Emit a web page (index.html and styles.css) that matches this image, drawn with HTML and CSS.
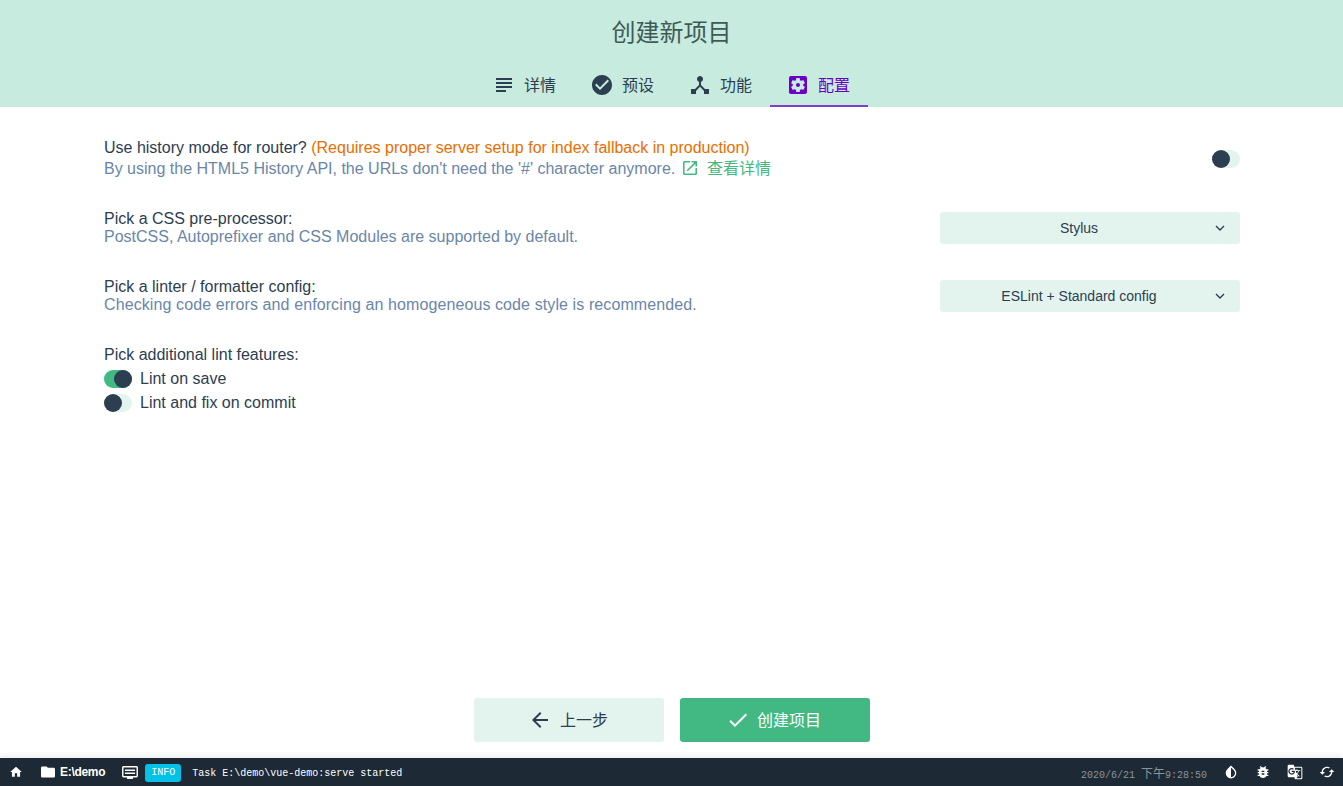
FILE: index.html
```html
<!DOCTYPE html>
<html>
<head>
    <meta charset="utf-8">
    <title>创建新项目</title>
    <link rel="stylesheet" href="styles.css">
</head>
<body>
    <div class="page">
        <div class="header">
            <h1 class="title">创建新项目</h1>
            <div class="tabs">
                <div class="tab">
                    <svg class="tab-icon" viewBox="3 3 18 18"><path d="M14 17H4v2h10v-2zm6-8H4v2h16V9zM4 15h16v-2H4v2zM4 5v2h16V5H4z"/></svg>
                    <span>详情</span>
                </div>
                <div class="tab">
                    <svg class="tab-icon wide" viewBox="2 2 20 20"><path d="M12 2C6.48 2 2 6.48 2 12s4.48 10 10 10 10-4.48 10-10S17.52 2 12 2zm-2 15l-5-5 1.41-1.41L10 14.17l7.59-7.59L19 8l-9 9z"/></svg>
                    <span>预设</span>
                </div>
                <div class="tab">
                    <svg class="tab-icon" viewBox="3 3 18 18"><path d="M17 16l-4-4V8.82C14.15 8.4 15 7.31 15 6c0-1.66-1.34-3-3-3S9 4.34 9 6c0 1.31.85 2.4 2 2.82V12l-4 4H3v5h5v-3.05l4-4.2 4 4.2V21h5v-5h-4z"/></svg>
                    <span>功能</span>
                </div>
                <div class="tab active">
                    <svg class="tab-icon" viewBox="3 3 18 18"><path d="M12 10c-1.1 0-2 .9-2 2s.9 2 2 2 2-.9 2-2-.9-2-2-2zm7-7H5c-1.11 0-2 .9-2 2v14c0 1.1.89 2 2 2h14c1.11 0 2-.9 2-2V5c0-1.1-.89-2-2-2zm-1.75 9c0 .23-.02.46-.05.68l1.48 1.16c.13.11.17.3.08.45l-1.4 2.42c-.09.15-.27.21-.43.15l-1.74-.7c-.36.28-.76.51-1.18.69l-.26 1.85c-.03.17-.18.3-.35.3h-2.8c-.17 0-.32-.13-.35-.29l-.26-1.85c-.43-.18-.82-.41-1.18-.69l-1.74.7c-.16.06-.34 0-.43-.15l-1.4-2.42c-.09-.15-.05-.34.08-.45l1.48-1.16c-.03-.23-.05-.46-.05-.69 0-.23.02-.46.05-.68l-1.48-1.16c-.13-.11-.17-.3-.08-.45l1.4-2.42c.09-.15.27-.21.43-.15l1.74.7c.36-.28.76-.51 1.18-.69l.26-1.85c.03-.17.18-.3.35-.3h2.8c.17 0 .32.13.35.29l.26 1.85c.43.18.82.41 1.18.69l1.74-.7c.16-.06.34 0 .43.15l1.4 2.42c.09.15.05.34-.08.45l-1.48 1.16c.03.23.05.46.05.69z"/></svg>
                    <span>配置</span>
                </div>
            </div>
        </div>

        <div class="content">
            <div class="prompt prompt-first">
                <div class="prompt-text loose">
                    <div>Use history mode for router? <span class="warn">(Requires proper server setup for index fallback in production)</span></div>
                    <div class="desc">By using the HTML5 History API, the URLs don't need the '#' character anymore.
                        <a class="more">
                            <svg class="more-icon" viewBox="3 3 18 18"><path d="M19 19H5V5h7V3H5c-1.11 0-2 .9-2 2v14c0 1.1.89 2 2 2h14c1.1 0 2-.9 2-2v-7h-2v7zM14 3v2h3.59l-9.83 9.83 1.41 1.41L19 6.41V10h2V3h-7z"/></svg>
                            查看详情
                        </a>
                    </div>
                </div>
                <div class="switch"><div class="knob"></div></div>
            </div>

            <div class="prompt">
                <div class="prompt-text">
                    <div>Pick a CSS pre-processor:</div>
                    <div class="desc">PostCSS, Autoprefixer and CSS Modules are supported by default.</div>
                </div>
                <div class="select">
                    <span>Stylus</span>
                    <svg class="chevron" viewBox="0 0 10 6"><path d="M1 1l4 4 4-4"/></svg>
                </div>
            </div>

            <div class="prompt">
                <div class="prompt-text">
                    <div>Pick a linter / formatter config:</div>
                    <div class="desc desc-wide">Checking code errors and enforcing an homogeneous code style is recommended.</div>
                </div>
                <div class="select">
                    <span>ESLint + Standard config</span>
                    <svg class="chevron" viewBox="0 0 10 6"><path d="M1 1l4 4 4-4"/></svg>
                </div>
            </div>

            <div class="lint-group">
                <div class="lint-title">Pick additional lint features:</div>
                <div class="lint-item">
                    <div class="switch on"><div class="knob"></div></div>
                    <span>Lint on save</span>
                </div>
                <div class="lint-item">
                    <div class="switch"><div class="knob"></div></div>
                    <span>Lint and fix on commit</span>
                </div>
            </div>
        </div>

        <div class="actions">
            <button class="btn btn-back">
                <svg class="btn-icon small" viewBox="4 4 16 16"><path d="M20 11H7.83l5.59-5.59L12 4l-8 8 8 8 1.41-1.41L7.83 13H20v-2z"/></svg>
                <span>上一步</span>
            </button>
            <button class="btn btn-create">
                <svg class="btn-icon" viewBox="3 3 18 18"><path d="M9 16.17L4.83 12l-1.42 1.41L9 19 21 7l-1.41-1.41z"/></svg>
                <span>创建项目</span>
            </button>
        </div>

        <div class="statusbar">
            <svg class="bar-icon home" viewBox="0 0 24 24"><path d="M10 20v-6h4v6h5v-8h3L12 3 2 12h3v8z"/></svg>
            <div class="cwd">
                <svg class="bar-icon" viewBox="2 2 20 20"><path d="M10 4H4c-1.1 0-1.99.9-1.99 2L2 18c0 1.1.9 2 2 2h16c1.1 0 2-.9 2-2V8c0-1.1-.9-2-2-2h-8l-2-2z"/></svg>
                <span>E:\demo</span>
            </div>
            <svg class="bar-icon console" viewBox="1 3 22 18"><path d="M21 3H3c-1.1 0-2 .9-2 2v12c0 1.1.9 2 2 2h5v2h8v-2h5c1.1 0 1.99-.9 1.99-2L23 5c0-1.1-.9-2-2-2zm0 14H3V5h18v12zm-2-9H5v2h14V8zm0 4H5v2h14v-2z"/></svg>
            <span class="tag">INFO</span>
            <span class="log">Task E:\demo\vue-demo:serve started</span>
            <div class="spacer"></div>
            <span class="clock">2020/6/21 <span class="clock-cjk">下午</span>9:28:50</span>
            <svg class="bar-icon right" viewBox="0 0 24 24"><path transform="translate(24 0) scale(-1 1)" d="M17.66 7.93L12 2.27 6.34 7.93c-3.12 3.12-3.12 8.19 0 11.31C7.9 20.8 9.95 21.58 12 21.58c2.05 0 4.1-.78 5.66-2.34 3.12-3.12 3.12-8.19 0-11.31zM12 19.59c-1.6 0-3.11-.62-4.24-1.76C6.62 16.69 6 15.19 6 13.59s.62-3.11 1.76-4.24L12 5.1v14.49z"/></svg>
            <svg class="bar-icon right" viewBox="0 0 24 24"><path d="M20 8h-2.81c-.45-.78-1.07-1.45-1.82-1.96L17 4.41 15.59 3l-2.17 2.17C12.96 5.06 12.49 5 12 5c-.49 0-.96.06-1.41.17L8.41 3 7 4.41l1.62 1.63C7.88 6.55 7.26 7.22 6.81 8H4v2h2.09c-.05.33-.09.66-.09 1v1H4v2h2v1c0 .34.04.67.09 1H4v2h2.81c1.04 1.79 2.97 3 5.19 3s4.15-1.21 5.19-3H20v-2h-2.09c.05-.33.09-.66.09-1v-1h2v-2h-2v-1c0-.34-.04-.67-.09-1H20V8zm-6 8h-4v-2h4v2zm0-4h-4v-2h4v2z"/></svg>
            <svg class="bar-icon right" viewBox="0 0 24 24"><path d="M21 4H11l-1-3H3c-1.1 0-2 .9-2 2v15c0 1.1.9 2 2 2h8l1 3h9c1.1 0 2-.9 2-2V6c0-1.1-.9-2-2-2zM7 16c-2.76 0-5-2.24-5-5s2.24-5 5-5c1.35 0 2.48.5 3.34 1.3L8.99 8.6c-.37-.35-1.01-.76-1.99-.76-1.71 0-3.1 1.42-3.1 3.16S5.29 14.16 7 14.16c1.98 0 2.72-1.42 2.84-2.16H7v-1.71h4.71c.04.25.07.5.07.83C11.78 14 9.8 16 7 16zm6.17-5.42h3.7c-.43 1.25-1.11 2.43-2.05 3.47-.31-.35-.6-.72-.86-1.1l-.79-2.37zm8.33 9.92c0 .55-.45 1-1 1H14l2-2.5-1.04-3.1 3.1 3.1.92-.92-3.3-3.25.02-.03c1.13-1.25 1.93-2.69 2.4-4.22H20v-1.3h-4.53V8h-1.29v1.3h-1.44l-1.17-3.5H20.5c.55 0 1 .45 1 1v13.7z"/></svg>
            <svg class="bar-icon right last" viewBox="0 0 24 24"><path transform="rotate(90 12 12)" d="M12 4V1L8 5l4 4V6c3.31 0 6 2.69 6 6 0 1.01-.25 1.97-.7 2.8l1.46 1.46C19.54 15.03 20 13.57 20 12c0-4.42-3.58-8-8-8zm0 14c-3.31 0-6-2.69-6-6 0-1.01.25-1.97.7-2.8L5.24 7.74C4.46 8.97 4 10.43 4 12c0 4.42 3.58 8 8 8v3l4-4-4-4v3z"/></svg>
        </div>
    </div>
</body>
</html>
```
FILE: styles.css
```css
* {
    margin: 0;
    padding: 0;
    box-sizing: border-box;
}
html, body {
    height: 100%;
}
body {
    font-family: "Liberation Sans", "Noto Sans CJK SC", Arial, sans-serif;
    font-size: 16px;
    color: #2c3e50;
    background-color: white;
    overflow: hidden;
}
svg {
    fill: currentColor;
}
.page {
    height: 786px;
    display: flex;
    flex-direction: column;
}
.header {
    height: 107px;
    flex-shrink: 0;
    background-color: #c7ebdf;
    display: flex;
    flex-direction: column;
    align-items: center;
}
.title {
    height: 63px;
    font-size: 24px;
    line-height: 66px;
    font-weight: normal;
    color: #3f5a55;
}
.tabs {
    display: flex;
    height: 44px;
    padding-left: 1px;
}
.tab {
    width: 98px;
    display: flex;
    align-items: center;
    justify-content: center;
    gap: 10px;
    color: #2c3e50;
}
.tab span {
    padding-bottom: 2px;
}
.tab.active {
    color: #6a00c8;
    box-shadow: inset 0 -2px 0 #7f3fc9;
}
.tab-icon {
    width: 18px;
    height: 18px;
    margin: 0 1px;
}
.tab-icon.wide {
    width: 20px;
    height: 20px;
    margin: 0;
}
.content {
    flex: 1;
    padding: 30px 103px 0 104px;
}
.prompt {
    display: flex;
    align-items: center;
    justify-content: space-between;
    height: 32px;
    margin-bottom: 36px;
}
.prompt-first {
    height: 42px;
    margin-bottom: 33px;
}
.prompt-first .switch {
    margin-top: 2px;
}
.prompt-text {
    line-height: 18px;
}
.prompt-text.loose {
    line-height: 21px;
}
.desc {
    color: #6a86a8;
}
.desc-wide {
    letter-spacing: 0.1px;
}
.warn {
    color: #ea6e00;
}
.more {
    color: #42b983;
    margin-left: 3px;
}
.more-icon {
    width: 14px;
    height: 14px;
    vertical-align: -1px;
    margin-right: 6px;
}
.switch {
    position: relative;
    width: 28px;
    height: 18px;
    border-radius: 9px;
    background-color: #e3f4ee;
    flex-shrink: 0;
}
.switch.on {
    background-color: #42b983;
}
.knob {
    position: absolute;
    top: 0;
    left: 0;
    width: 18px;
    height: 18px;
    border-radius: 50%;
    background-color: #2c3e50;
}
.switch.on .knob {
    left: 10px;
}
.select {
    position: relative;
    width: 300px;
    height: 32px;
    flex-shrink: 0;
    padding-right: 22px;
    border-radius: 3px;
    background-color: #e3f4ee;
    display: flex;
    align-items: center;
    justify-content: center;
    font-size: 14px;
}
.chevron {
    position: absolute;
    right: 15px;
    top: 13px;
    width: 10px;
    height: 6px;
    fill: none;
    stroke: #2c3e50;
    stroke-width: 1.4;
}
.lint-group {
    margin-top: -2px;
}
.lint-title {
    line-height: 18px;
    margin-bottom: 6px;
}
.lint-item {
    display: flex;
    align-items: center;
    gap: 8px;
    height: 18px;
    margin-bottom: 6px;
}
.actions {
    display: flex;
    justify-content: center;
    gap: 16px;
    padding-left: 1px;
    padding-bottom: 16px;
}
.btn {
    width: 190px;
    height: 44px;
    border: none;
    border-radius: 3px;
    display: flex;
    align-items: center;
    justify-content: center;
    gap: 10px;
    font-family: inherit;
    font-size: 16px;
}
.btn span {
    padding-bottom: 2px;
}
.btn-back {
    background-color: #e3f4ee;
    color: #2c3e50;
    padding-left: 2px;
    gap: 12px;
}
.btn-create {
    background-color: #42b983;
    color: white;
}
.btn-icon {
    width: 18px;
    height: 18px;
}
.btn-icon.small {
    width: 16px;
    height: 16px;
}
.statusbar {
    height: 28px;
    flex-shrink: 0;
    background-color: #1d2935;
    box-shadow: 0 -2px 6px rgba(0,0,0,0.08);
    display: flex;
    align-items: center;
    color: white;
    font-size: 12px;
}
.bar-icon {
    width: 14px;
    height: 14px;
    flex-shrink: 0;
}
.home {
    margin-left: 9px;
}
.cwd {
    display: flex;
    align-items: center;
    gap: 5px;
    margin-left: 18px;
    font-weight: bold;
    letter-spacing: -0.3px;
}
.console {
    width: 16px;
    height: 13px;
    margin-left: 17px;
}
.tag {
    margin-left: 7px;
    margin-top: 2px;
    width: 36px;
    height: 18px;
    line-height: 18px;
    text-align: center;
    border-radius: 3px;
    background-color: #03c2e6;
    font-family: "Liberation Mono", monospace;
    font-size: 10px;
}
.log {
    margin-left: 11px;
    margin-top: 2px;
    font-family: "Liberation Mono", monospace;
    font-size: 10px;
}
.spacer {
    flex: 1;
}
.clock {
    font-family: "Liberation Mono", monospace;
    font-size: 10px;
    color: #8a949d;
}
.clock-cjk {
    font-family: "Noto Sans CJK SC", sans-serif;
    font-size: 12px;
}
.right {
    width: 16px;
    height: 16px;
    margin-left: 16px;
}
.last {
    margin-right: 8px;
}
```
